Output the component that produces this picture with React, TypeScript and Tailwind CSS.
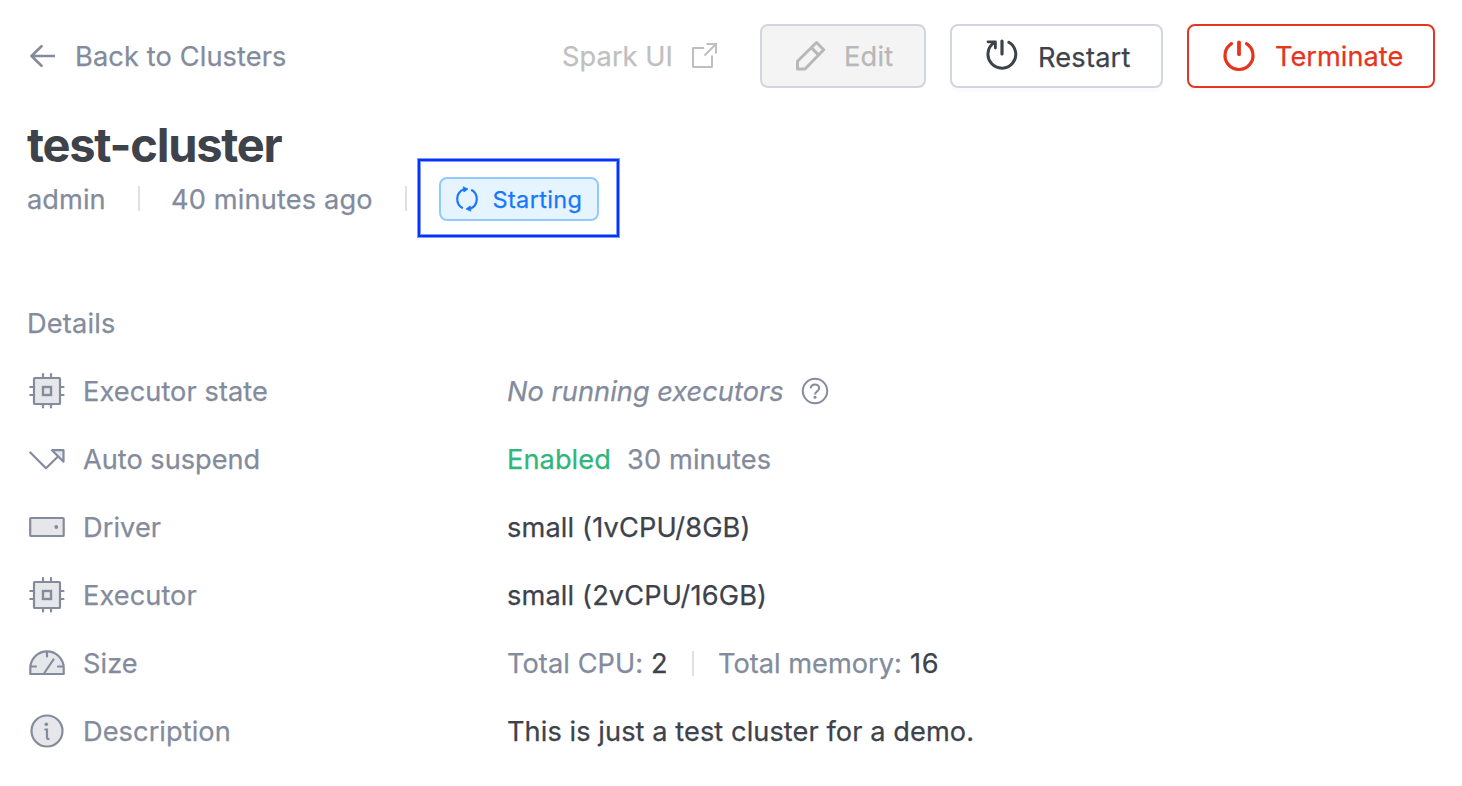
import type { ReactNode } from "react";

function BackArrow() {
  return (
    <svg width="28" height="24" viewBox="0 0 28 24" fill="none" stroke="currentColor" strokeWidth="2.6" strokeLinecap="round" strokeLinejoin="round">
      <path d="M27.300 12H4.500M14.500 2.200 4.500 12l10 9.800" />
    </svg>
  );
}

function ExternalIcon() {
  return (
    <svg width="28" height="28" viewBox="0 0 28 28" fill="none" stroke="currentColor" strokeWidth="2">
      <path d="M14 6H3v19h19V13.500" strokeLinejoin="round" />
      <path d="M16.500 2H26v9.500M26 2 14.500 13.500" />
    </svg>
  );
}

function PencilIcon() {
  return (
    <svg width="32" height="32" viewBox="0 0 32 32" fill="none" stroke="currentColor" strokeWidth="3" strokeLinejoin="round">
      <path d="M3.500 29v-7.700L22.500 2.500l7.200 7.200L11 29zM17.300 7.600l7.500 7.500" />
    </svg>
  );
}

function RestartIcon() {
  return (
    <svg width="34" height="34" viewBox="0 0 34 34" fill="none" stroke="currentColor" strokeWidth="3" strokeLinecap="round" strokeLinejoin="round">
      <path d="M23.800 3.200A13.900 13.900 0 1 1 9.300 3.600" />
      <path d="M3 2.800h7.400v6.200" strokeWidth="2.800" />
      <path d="M17 2v13" strokeWidth="3.200" />
    </svg>
  );
}

function PowerIcon() {
  return (
    <svg width="34" height="34" viewBox="0 0 34 34" fill="none" stroke="currentColor" strokeWidth="3.200" strokeLinecap="round">
      <path d="M24.500 4.700a14 14 0 1 1-15 0" />
      <path d="M17 3.400v11.800" strokeWidth="3.800" />
    </svg>
  );
}

function SyncIcon() {
  return (
    <svg width="26" height="28" viewBox="0 0 26 28" fill="none" stroke="currentColor" strokeWidth="2.200">
      <path d="M8.800 23.200A10.500 10.500 0 0 1 9.800 4.200M17.200 4.800A10.500 10.500 0 0 1 16.200 23.800" />
      <path d="M9.200 1.800 14 4 9.900 7zM16.800 26.200 12 24 16.100 21z" fill="currentColor" strokeWidth="0.800" />
    </svg>
  );
}

function ChipIcon() {
  return (
    <svg width="36" height="36" viewBox="0 0 36 36" fill="none" stroke="currentColor" strokeWidth="2.200">
      <path d="M14 1.200v4M22 1.200v4M14 30v4.500M22 30v4.500M1.200 14h4M1.200 22h4M30 14h4.500M30 22h4.500" strokeLinecap="round" />
      <rect x="5" y="5" width="26" height="26" rx="0.800" fill="#e6e7eb" />
      <rect x="14" y="14" width="8" height="8" strokeWidth="2.400" />
    </svg>
  );
}

function SuspendIcon() {
  return (
    <svg width="36" height="36" viewBox="0 0 36 36" fill="none" stroke="currentColor" strokeWidth="2.200" strokeLinecap="round" strokeLinejoin="round">
      <path d="m1.300 11.500 15.700 15.700L29 15.500" />
      <path d="M23 9.200h11.500v11.500z" fill="#e6e7eb" />
    </svg>
  );
}

function DriveIcon() {
  return (
    <svg width="36" height="36" viewBox="0 0 36 36" fill="none" stroke="currentColor" strokeWidth="2.200">
      <rect x="1.200" y="9" width="33.500" height="18" rx="0.800" fill="#e6e7eb" />
      <circle cx="27.300" cy="18" r="1.900" fill="currentColor" stroke="none" />
    </svg>
  );
}

function GaugeIcon() {
  return (
    <svg width="36" height="36" viewBox="0 0 36 36" fill="none" stroke="currentColor" strokeWidth="2.200" strokeLinecap="round" strokeLinejoin="round">
      <path d="M1.300 29V23a16.700 16.700 0 0 1 33.400 0v6z" fill="#e6e7eb" />
      <path d="M18 7v4.500M2 21.500h5M29 21.500h5M15 28.500 24.500 14.500" />
    </svg>
  );
}

function InfoIcon() {
  return (
    <svg width="36" height="36" viewBox="0 0 36 36" fill="none" stroke="currentColor" strokeWidth="2.200" strokeLinecap="round">
      <circle cx="18" cy="18" r="15.500" fill="#e6e7eb" />
      <path d="M16.200 16.500h1.800v8q0 1.500 1.700 1.500" />
      <circle cx="17.300" cy="11.200" r="1.800" fill="currentColor" stroke="none" />
    </svg>
  );
}

function HelpIcon() {
  return (
    <svg width="28" height="28" viewBox="0 0 28 28" fill="none" stroke="currentColor" strokeWidth="2">
      <circle cx="14" cy="14" r="12.200" />
      <path d="M9.700 11.300c.2-2.400 2-3.800 4.300-3.800s4.200 1.500 4.200 3.700c0 3.300-4.200 3-4.200 6.300" />
      <circle cx="14" cy="20.300" r="1.500" fill="currentColor" stroke="none" />
    </svg>
  );
}

function Divider() {
  return <span className="h-[25px] w-[2px] shrink-0 bg-[#dee0e5]" />;
}

function Row({ icon, label, children }: { icon: ReactNode; label: ReactNode; children: ReactNode }) {
  return (
    <div className="flex h-[68px] items-center">
      <dt className="flex w-[480px] items-center gap-[18px] pl-[2px] text-[#838b9c]">
        {icon}
        {label}
      </dt>
      <dd className="flex items-center">{children}</dd>
    </div>
  );
}

export default function App() {
  return (
    <main className="h-[786px] w-[1462px] overflow-hidden bg-white pl-[27px] pr-[27px] pt-6 font-['Inter',sans-serif] text-[27.2px] leading-[35px] font-normal [-webkit-text-stroke-width:0.25px] tracking-[0.07px] whitespace-nowrap text-[#3d424b]">
      <header className="flex h-16 items-center">
        <a className="flex items-center gap-5 text-[#838b9c]">
          <BackArrow />
          <span className="tracking-[0.12px]">Back to Clusters</span>
        </a>
        <div className="ml-auto flex items-center gap-6">
          <a className="mr-[18px] flex items-center gap-[17px] text-[#bfbfbf]">
            <span>Spark UI</span>
            <ExternalIcon />
          </a>
          <button className="flex h-16 w-[166px] items-center gap-[18px] rounded-lg border-2 border-[#d0d5e0] bg-[#f4f4f4] pl-8 tracking-[0.2px] text-[#b8b8b8]">
            <PencilIcon />
            <span>Edit</span>
          </button>
          <button className="flex h-16 w-[213px] items-center gap-[18px] rounded-lg border-2 border-[#d0d5e0] bg-white pl-[33px] tracking-[0.2px] shadow-[0_4px_0_rgba(0,0,0,0.016)]">
            <RestartIcon />
            <span className="pt-[2px] pl-px">Restart</span>
          </button>
          <button className="flex h-16 w-[248px] items-center gap-[18px] rounded-lg border-2 border-[#e6341e] bg-white pl-[33px] text-[#e6341e] shadow-[0_4px_0_rgba(0,0,0,0.016)]">
            <PowerIcon />
            <span className="pl-px tracking-[0.02px]">Terminate</span>
          </button>
        </div>
      </header>

      <h1 className="mt-[29px] h-[56px] text-[47px] leading-[56px] font-bold tracking-[-1.25px] [-webkit-text-stroke-width:0]">test-cluster</h1>

      <div className="mt-[-15px] flex h-[80px] items-center text-[#838b9c]">
        <span className="w-[111px] pt-[2px]">admin</span>
        <Divider />
        <span className="ml-[31px] w-[234px] pt-[2px] tracking-[0.15px]">40 minutes ago</span>
        <Divider />
        <div className="mr-px ml-[11px] flex h-[78px] w-[201px] items-center justify-center border-2 border-[#0433ff] pt-[2px] shadow-[0_0_0_1px_#8299ff,inset_0_0_0_1px_#8299ff]">
          <span className="flex h-11 w-40 items-center gap-3 rounded-lg border-2 border-[#91caff] bg-[#e6f4ff] pl-[13px] text-[23.500px] text-[#1677ff]">
            <SyncIcon />
            <span className="pl-px tracking-[0.35px]">Starting</span>
          </span>
        </div>
      </div>

      <h2 className="mt-[68px] h-[34px] tracking-[0.18px] text-[#838b9c]">Details</h2>

      <dl className="mt-[17px]">
        <Row icon={<ChipIcon />} label="Executor state">
          <span className="w-[294px] text-[#838b9c] italic tracking-[0.03px]">No running executors</span>
          <span className="text-[#838b9c]"><HelpIcon /></span>
        </Row>
        <Row icon={<SuspendIcon />} label={<span className="tracking-[-0.02px]">Auto suspend</span>}>
          <span className="w-[120px] text-[#2fb67c]">Enabled</span>
          <span className="tracking-[0.12px] text-[#838b9c]">30 minutes</span>
        </Row>
        <Row icon={<DriveIcon />} label="Driver">
          <span className="tracking-[0.14px]">small (1vCPU/8GB)</span>
        </Row>
        <Row icon={<ChipIcon />} label="Executor">
          <span className="tracking-[0.14px]">small (2vCPU/16GB)</span>
        </Row>
        <Row icon={<GaugeIcon />} label="Size">
          <span className="w-[144px] text-[#838b9c]">Total CPU:</span>
          <span className="w-[41px]">2</span>
          <Divider />
          <span className="ml-6 w-[191px] text-[#838b9c] tracking-[0px]">Total memory:</span>
          <span className="pl-px tracking-[0.8px]">16</span>
        </Row>
        <Row icon={<InfoIcon />} label="Description">
          <span>This is just a test cluster for a demo.</span>
        </Row>
      </dl>
    </main>
  );
}
